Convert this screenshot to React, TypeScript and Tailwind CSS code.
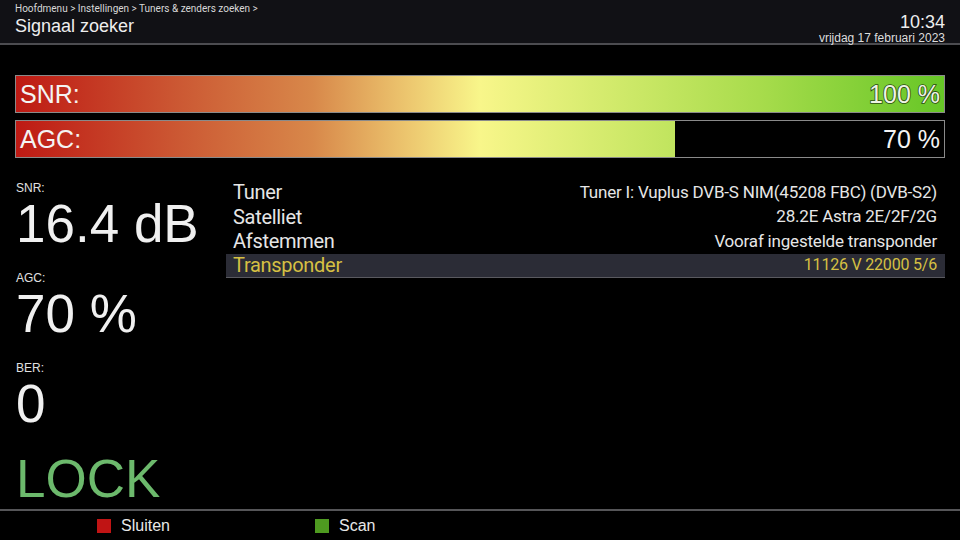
import React from "react";

const grad =
  "bg-[linear-gradient(to_right,#be1a14_0%,#cc5a34_18%,#d8884a_32%,#ecc56e_42%,#f8f68a_50%,#d8ec70_62%,#a8dc4c_80%,#66c626_100%)]";

function Bar({ label, value, pct, outlined }: { label: string; value: string; pct: number; outlined?: boolean }) {
  return (
    <div className="relative w-[930px] h-[38px] border border-[#8a8a8a] bg-black">
      <div className="h-full overflow-hidden" style={{ width: `${pct}%` }}>
        <div className={`w-[928px] h-full ${grad}`} />
      </div>
      <div className="absolute inset-0 flex items-center justify-between pl-[4px] pr-[4px] text-[25px] leading-none text-[#f4f4f4]">
        <span>{label}</span>
        <span
          className={
            outlined
              ? "text-[#eef4e4] [-webkit-text-stroke:1.6px_#2c4c14] [paint-order:stroke_fill]"
              : ""
          }
        >
          {value}
        </span>
      </div>
    </div>
  );
}

function Row({ k, v, sel }: { k: string; v: string; sel?: boolean }) {
  return (
    <div
      className={`flex h-[24.5px] items-center justify-between pl-[7px] pr-[8px] ${
        sel ? "bg-[#2b2c36] border-b border-[#5a5a60] text-[#d6c043]" : "text-[#e6e6e6]"
      }`}
    >
      <span className="text-[20px] leading-none tracking-[-0.3px]">{k}</span>
      <span className={`leading-none tracking-[-0.2px] ${sel ? "text-[16px]" : "text-[17px]"}`}>{v}</span>
    </div>
  );
}

export default function App() {
  return (
    <div className="w-[960px] h-[540px] bg-black overflow-hidden flex flex-col text-white font-['Liberation_Sans',Arial,sans-serif]">
      <div className="h-[45px] shrink-0 bg-[#111115] border-b-2 border-[#4c4c50] flex justify-between px-[15px]">
        <div className="flex flex-col">
          <div className="text-[10px] leading-none mt-[4px] text-[#d8d8d8] font-['Roboto',sans-serif]">
            Hoofdmenu &gt; Instellingen &gt; Tuners &amp; zenders zoeken &gt;
          </div>
          <div className="text-[18px] leading-none mt-[3px] text-[#eeeeee]">Signaal zoeker</div>
        </div>
        <div className="flex flex-col items-end">
          <div className="text-[18px] leading-none mt-[13px] text-[#eeeeee]">10:34</div>
          <div className="text-[12px] leading-none mt-[1px] text-[#dddddd]">vrijdag 17 februari 2023</div>
        </div>
      </div>

      <div className="flex flex-col gap-[7px] pl-[15px] mt-[30px]">
        <Bar label="SNR:" value="100 %" pct={100} outlined />
        <Bar label="AGC:" value="70 %" pct={71} />
      </div>

      <div className="flex mt-[22px] flex-1 min-h-0 overflow-hidden">
        <div className="w-[226px] shrink-0 pl-[16px] flex flex-col">
          <div className="text-[12px] leading-none mt-[2px] text-[#e0e0e0]">SNR:</div>
          <div className="text-[53px] leading-[52px] mt-[4px] text-[#f0f0f0]">16.4 dB</div>
          <div className="text-[12px] leading-none mt-[22px] text-[#e0e0e0]">AGC:</div>
          <div className="text-[53px] leading-[52px] mt-[4px] text-[#f0f0f0]">70 %</div>
          <div className="text-[12px] leading-none mt-[22px] text-[#e0e0e0]">BER:</div>
          <div className="text-[53px] leading-[52px] mt-[4px] text-[#f0f0f0]">0</div>
          <div className="text-[53px] leading-[52px] mt-[23px] text-[#6cb96c]">LOCK</div>
        </div>
        <div className="flex-1 mr-[15px] font-['Roboto',sans-serif]">
          <Row k="Tuner" v="Tuner I: Vuplus DVB-S NIM(45208 FBC) (DVB-S2)" />
          <Row k="Satelliet" v="28.2E Astra 2E/2F/2G" />
          <Row k="Afstemmen" v="Vooraf ingestelde transponder" />
          <Row k="Transponder" v="11126 V 22000 5/6" sel />
        </div>
      </div>

      <div className="h-[31px] shrink-0 border-t-2 border-[#555558] flex items-center pl-[97px] text-[16px] text-[#e8e8e8]">
        <div className="w-[218px] flex items-center gap-[10px]">
          <div className="w-[14px] h-[14px] bg-[#c01414]" />
          <span>Sluiten</span>
        </div>
        <div className="flex items-center gap-[10px]">
          <div className="w-[14px] h-[14px] bg-[#4e9a20]" />
          <span>Scan</span>
        </div>
      </div>
    </div>
  );
}
